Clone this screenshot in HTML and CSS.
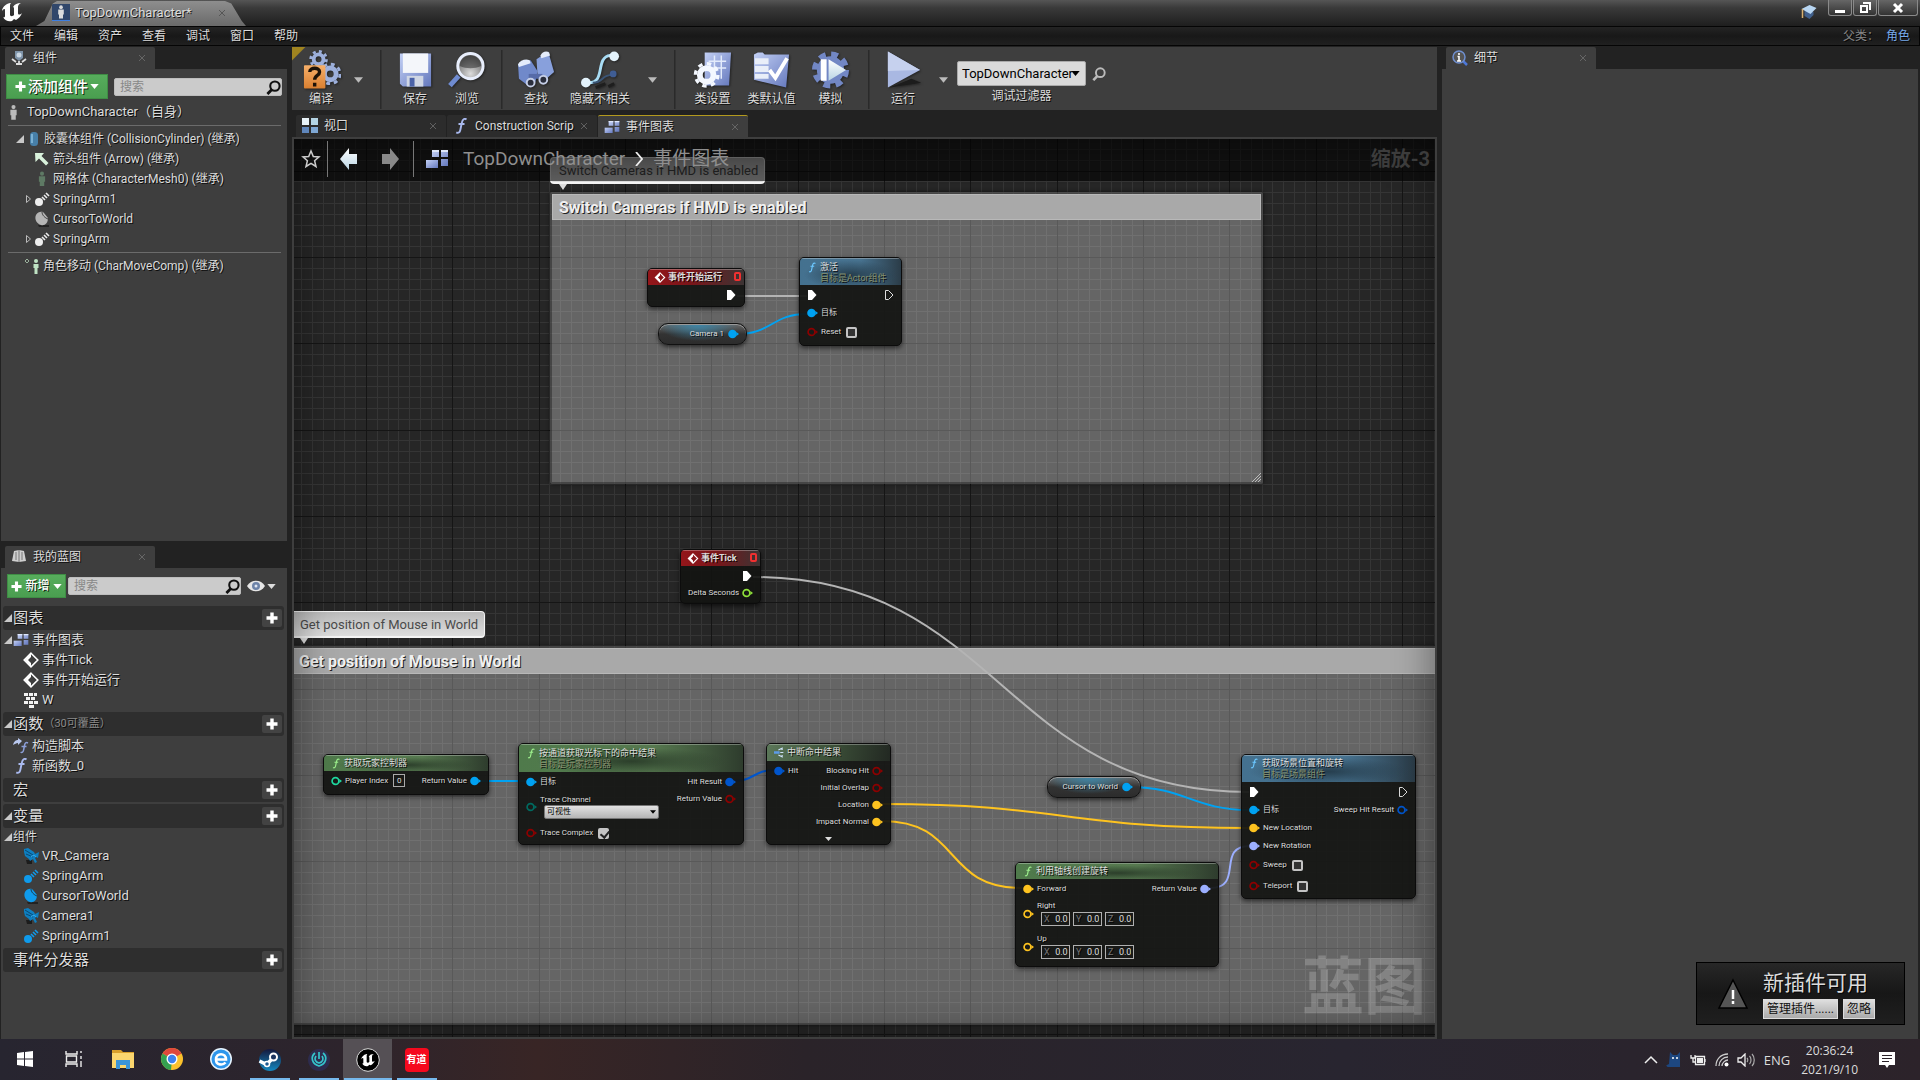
FILE: index.html
```html
<!DOCTYPE html>
<html lang="zh-CN">
<head>
    <meta charset="UTF-8">
    <meta name="viewport" content="width=device-width, initial-scale=1.0">
    <title>TopDownCharacter</title>
    <link rel="stylesheet" href="styles.css">
</head>
<body>

    <!-- Icon sprite -->
    <svg class="sprite" aria-hidden="true">
        <defs>
            <linearGradient id="blue" x1="0" y1="0" x2="1" y2="1"><stop offset="0" stop-color="#c3d0f5"/><stop offset="1" stop-color="#6478bd"/></linearGradient>
            <linearGradient id="pale" x1="0" y1="0" x2="0" y2="1"><stop offset="0" stop-color="#ffffff"/><stop offset="1" stop-color="#b9d4e4"/></linearGradient>
            <linearGradient id="orange" x1="0" y1="0" x2="0" y2="1"><stop offset="0" stop-color="#f7b06a"/><stop offset="1" stop-color="#d97f30"/></linearGradient>
            <linearGradient id="steam" x1="0" y1="0" x2="0" y2="1"><stop offset="0" stop-color="#14183c"/><stop offset="1" stop-color="#1488c0"/></linearGradient>
            <radialGradient id="lens" cx=".5" cy=".8" r=".8"><stop offset="0" stop-color="#dcdcdc"/><stop offset="1" stop-color="#555"/></radialGradient>
        </defs>
        <symbol id="i-pin" viewBox="0 0 11 10"><circle cx="4.5" cy="5" r="3.4" fill="none" stroke="currentColor" stroke-width="1.7"/><path d="M8.4 3 11 5 8.4 7z" fill="currentColor"/></symbol>
        <symbol id="i-pin-on" viewBox="0 0 11 10"><circle cx="4.5" cy="5" r="4.3" fill="currentColor"/><path d="M8.4 3 11 5 8.4 7z" fill="currentColor"/></symbol>
        <symbol id="i-exec" viewBox="0 0 11 10"><path d="M2.500.5h3L10 5 5.500 9.500h-3z" fill="none" stroke="#ddd"/></symbol>
        <symbol id="i-exec-on" viewBox="0 0 11 10"><path d="M1 0h4l4.500 5L5 10H1z" fill="#fff"/></symbol>
        <symbol id="i-func" viewBox="0 0 16 16"><path d="M13.500 1.500c-2-1.500-4 0-4.600 3L7.300 12c-.5 2.500-2 3.500-4 2.400M5.500 6h6" fill="none" stroke="currentColor" stroke-width="1.900"/></symbol>
        <symbol id="i-event" viewBox="0 0 16 16"><path d="M8 1.200 14.800 8 8 14.800 1.200 8z" fill="none" stroke="#fff" stroke-width="1.600"/><path d="M8 1.500v3.500L5 8l3 3v3.500L1.500 8z" fill="#fff"/></symbol>
        <symbol id="i-break" viewBox="0 0 16 16"><path d="M0 6h9v4H0z" fill="#5d9be8"/><path d="M7 4l6-3v3M7 12l6 3v-3M10 8h5" stroke="#cfe2f8" stroke-width="1.800" fill="none"/></symbol>
        <symbol id="i-graph" viewBox="0 0 24 20"><path d="M7 1h7v7H7zM16 1h7v7h-7zM16 10h7v7h-7z" fill="url(#blue)"/><path d="M1 11h12v8H1z" fill="url(#blue)"/><path d="M7 1h7v2H7zM16 1h7v2h-7z" fill="#dfe8fb"/></symbol>
        <symbol id="i-view" viewBox="0 0 16 16"><path d="M0 0h7v7H0z" fill="#e8f3f8"/><path d="M9 0h7v7H9z" fill="#b4d4e4"/><path d="M0 9h7v6H0z" fill="#5f86bb"/><path d="M9 9h7v6H9z" fill="#7ea7d3"/></symbol>
        <symbol id="i-x" viewBox="0 0 8 8"><path d="M1 1l6 6M7 1 1 7" stroke="#777" fill="none"/></symbol>
        <symbol id="i-down" viewBox="0 0 10 6"><path d="M0 0h10L5 6z" fill="currentColor"/></symbol>
        <symbol id="i-open" viewBox="0 0 8 8"><path d="M8 0v8H0z" fill="#c8c8c8"/></symbol>
        <symbol id="i-closed" viewBox="0 0 8 8"><path d="M1.500.5v7L5.500 4z" fill="none" stroke="#bbb"/></symbol>
        <symbol id="i-plus" viewBox="0 0 12 12"><path d="M4.300.5h3.400v3.800h3.800v3.400H7.700v3.800H4.300V7.700H.5V4.300h3.800z" fill="#fff"/></symbol>
        <symbol id="i-search" viewBox="0 0 16 16"><circle cx="9.500" cy="6.500" r="5" fill="none" stroke="currentColor" stroke-width="2.200"/><path d="M6 10.500 1.500 15" stroke="currentColor" stroke-width="3"/></symbol>
        <symbol id="i-person" viewBox="0 0 10 18"><circle cx="5" cy="3" r="2.300" fill="currentColor"/><path d="M1.500 6h7v6H7.500v5h-5v-5h-1z" fill="currentColor"/></symbol>
        <symbol id="i-capsule" viewBox="0 0 10 16"><rect x="1" y="1" width="8" height="14" rx="3.500" fill="#477fa8"/><path d="M3 3v9" stroke="#8bc0e0" stroke-width="1.500"/></symbol>
        <symbol id="i-arrow" viewBox="0 0 16 16"><path d="M1 2h9L7.500 5l7 7-2.500 2.500-7-7L1.500 11z" fill="#d9f2dc"/></symbol>
        <symbol id="i-spring" viewBox="0 0 16 16"><circle cx="5" cy="11" r="4" fill="currentColor"/><path d="M8 6l3 3M10 4l3 3M12 2l3 3" stroke="currentColor" stroke-width="1.600"/></symbol>
        <symbol id="i-ball" viewBox="0 0 16 16"><path d="M4 14h11v2H5z" fill="#222"/><path d="M2 4c2-4 7-4 8-2l4 5c0 5-3 8-7 7S0 8 2 4z" fill="currentColor"/><path d="M8 1c0 3 3 6 6 7" stroke="#222" stroke-width=".8" fill="none"/></symbol>
        <symbol id="i-cam" viewBox="0 0 16 16"><path d="M3 12h6v4H4z" fill="#1c1c1c"/><path d="M1 1l4-1 6 4 1 2 4-2-1 6-2-1-1 1 2 4-2 1-2-4-3 2-1-2-4-3-1-4z" fill="#0f7fc0"/><path d="M2 2l8 5M3 6l7 3" stroke="#0a4a74"/><path d="M8 9c2-2 4-2 5 0" stroke="#3db4f5" fill="none"/></symbol>
        <symbol id="i-keys" viewBox="0 0 16 16"><path d="M1 1h4v3H1zM6 1h4v3H6zM11 1h3v3h-3zM3 5h4v3H3zM8 5h4v3H8zM1 9h4v3H1zM6 9h4v3H6zM11 9h4v3h-4zM6 13h5v3H6z" fill="#f2f2f2"/></symbol>
        <symbol id="i-construct" viewBox="0 0 16 16"><path d="M0 7c1-4 3-5 5-5V0l4 3-4 4V5C3 5 2 6 0 7z" fill="#b9c8ee"/><path d="M15 5c-2-1-3 0-3.400 2l-1 5c-.3 2-1.600 3-3 2M8.500 8.500h5" fill="none" stroke="#8c9fd8" stroke-width="1.500"/></symbol>
        <symbol id="i-comp" viewBox="0 0 16 16"><path d="M4 1h8v7L8 11 4 8z" fill="#7e93a8"/><circle cx="8" cy="5" r="2.500" fill="#c9d6e2"/><path d="M1 9l4 3M15 9l-4 3M8 11v4M5 14h6" stroke="#ddd" stroke-width="1.800"/></symbol>
        <symbol id="i-book" viewBox="0 0 16 16"><path d="M3 2l5-1 5 1 2 10-7 1-7-1z" fill="#cfcfcf"/><path d="M8 1v12M5 3v8M11 3v8" stroke="#777"/></symbol>
        <symbol id="i-info" viewBox="0 0 16 16"><path d="M10 10l5 5" stroke="#4d78d8" stroke-width="2.500"/><circle cx="7" cy="7" r="6" fill="#555" stroke="#6f8fd0" stroke-width="1.500"/><path d="M7 3v2M5.500 6.500H7V11M5 11h4" stroke="#fff" stroke-width="1.600" fill="none"/></symbol>
        <symbol id="i-unreal" viewBox="0 0 24 24"><path d="M10 3C5 4 2 8 2 11c1-2 3-3 3-1v6c0 1-1 2-2 1 2 4 6 5 9 4l2-2 2 1c3-2 5-4 6-7-2 2-4 2-4 0V7c0-2 1-3 3-4-4 0-6 1-8 4 1 0 1 1 1 2v6c-1 1-3 2-4 0V6c0-1 0-2 1-3z" fill="#fff"/></symbol>
    </svg>

    <header class="titlebar">
        <svg class="logo"><use href="#i-unreal"/></svg>
        <div class="window-tab">
            <span class="asset"><svg width="8" height="16"><use href="#i-person"/></svg></span>
            <span>TopDownCharacter*</span>
            <button class="close" aria-label="关闭"><svg><use href="#i-x"/></svg></button>
        </div>
        <svg class="tutorial" viewBox="0 0 16 16"><path d="M4 7v5l5 3 4-4V8z" fill="#41608c"/><path d="M1 5l8-4 7 3-6 6z" fill="#b8d6f2"/><path d="M2 5v9" stroke="#d8b070" stroke-width="1.500"/></svg>
        <div class="window-buttons">
            <button aria-label="最小化"><svg width="12" height="12"><path d="M1 8h10v3H1z" fill="#fff"/></svg></button>
            <button aria-label="还原"><svg width="12" height="12"><path d="M4 1h7v7M2 4h6v6H2z" fill="none" stroke="#fff" stroke-width="2"/></svg></button>
            <button class="wide" aria-label="关闭窗口"><svg width="12" height="12"><path d="M2 2l8 8M10 2l-8 8" stroke="#fff" stroke-width="3"/></svg></button>
        </div>
    </header>

    <nav class="menubar">
        <a href="#">文件</a><a href="#">编辑</a><a href="#">资产</a><a href="#">查看</a><a href="#">调试</a><a href="#">窗口</a><a href="#">帮助</a>
        <span class="parent">父类： <a href="#">角色</a></span>
    </nav>

    <main class="editor">
        <aside class="left">
            <section class="dock components">
                <div class="tab"><svg class="icon"><use href="#i-comp"/></svg><span>组件</span><button class="close" aria-label="关闭"><svg><use href="#i-x"/></svg></button></div>
                <div class="panel">
                    <div class="tools">
                        <button class="green big"><svg class="plus"><use href="#i-plus"/></svg>添加组件<svg class="caret"><use href="#i-down"/></svg></button>
                        <div class="search"><input type="text" placeholder="搜索" aria-label="搜索组件"><svg><use href="#i-search"/></svg></div>
                    </div>
                    <div class="self"><svg class="man"><use href="#i-person"/></svg>TopDownCharacter（自身）</div>
                    <hr>
                    <ul class="tree small">
                        <li><svg class="fold"><use href="#i-open"/></svg><svg class="icon slim"><use href="#i-capsule"/></svg>胶囊体组件 (CollisionCylinder) (继承)</li>
                        <li class="deep"><svg class="icon"><use href="#i-arrow"/></svg>箭头组件 (Arrow) (继承)</li>
                        <li class="deep"><svg class="icon mesh"><use href="#i-person"/></svg>网格体 (CharacterMesh0) (继承)</li>
                        <li class="deep"><svg class="fold"><use href="#i-closed"/></svg><svg class="icon white"><use href="#i-spring"/></svg>SpringArm1</li>
                        <li class="deep"><svg class="icon grey"><use href="#i-ball"/></svg>CursorToWorld</li>
                        <li class="deep"><svg class="fold"><use href="#i-closed"/></svg><svg class="icon white"><use href="#i-spring"/></svg>SpringArm</li>
                    </ul>
                    <hr>
                    <ul class="tree small">
                        <li class="move"><svg class="icon" viewBox="0 0 16 16"><path d="M3 1l2 2-2 2-2-2z" fill="none" stroke="#9ab09c"/><circle cx="12" cy="3" r="2" fill="#bfe3c4"/><path d="M9.500 6h5v4h-1v6h-3v-6h-1z" fill="#bfe3c4"/></svg>角色移动 (CharMoveComp) (继承)</li>
                    </ul>
                </div>
            </section>

            <section class="dock blueprint">
                <div class="tab"><svg class="icon"><use href="#i-book"/></svg><span>我的蓝图</span><button class="close" aria-label="关闭"><svg><use href="#i-x"/></svg></button></div>
                <div class="panel">
                    <div class="tools">
                        <button class="green"><svg class="plus"><use href="#i-plus"/></svg>新增<svg class="caret"><use href="#i-down"/></svg></button>
                        <div class="search"><input type="text" placeholder="搜索" aria-label="搜索蓝图"><svg><use href="#i-search"/></svg></div>
                        <button class="eye" aria-label="查看选项"><svg width="18" height="12" viewBox="0 0 18 12"><path d="M0 6c4-7 14-7 18 0-4 7-14 7-18 0z" fill="#e6e6e6"/><circle cx="9" cy="6" r="4" fill="#6d83a8"/><circle cx="9" cy="6" r="1.500" fill="#dfe6f2"/></svg><svg class="caret"><use href="#i-down"/></svg></button>
                    </div>
                    <h3><svg class="fold"><use href="#i-open"/></svg>图表<button aria-label="添加图表"><svg><use href="#i-plus"/></svg></button></h3>
                    <ul class="tree">
                        <li class="top"><svg class="fold"><use href="#i-open"/></svg><svg class="icon"><use href="#i-graph"/></svg>事件图表</li>
                        <li><svg class="icon"><use href="#i-event"/></svg>事件Tick</li>
                        <li><svg class="icon"><use href="#i-event"/></svg>事件开始运行</li>
                        <li><svg class="icon"><use href="#i-keys"/></svg>W</li>
                    </ul>
                    <h3><svg class="fold"><use href="#i-open"/></svg>函数<small>（30可覆盖）</small><button aria-label="添加函数"><svg><use href="#i-plus"/></svg></button></h3>
                    <ul class="tree">
                        <li class="top"><svg class="icon"><use href="#i-construct"/></svg>构造脚本</li>
                        <li class="top"><svg class="icon violet"><use href="#i-func"/></svg>新函数_0</li>
                    </ul>
                    <h3>宏<button aria-label="添加宏"><svg><use href="#i-plus"/></svg></button></h3>
                    <h3><svg class="fold"><use href="#i-open"/></svg>变量<button aria-label="添加变量"><svg><use href="#i-plus"/></svg></button></h3>
                    <h4><svg class="fold"><use href="#i-open"/></svg>组件</h4>
                    <ul class="tree vars">
                        <li><svg class="icon"><use href="#i-cam"/></svg>VR_Camera</li>
                        <li><svg class="icon"><use href="#i-spring"/></svg>SpringArm</li>
                        <li><svg class="icon"><use href="#i-ball"/></svg>CursorToWorld</li>
                        <li><svg class="icon"><use href="#i-cam"/></svg>Camera1</li>
                        <li><svg class="icon"><use href="#i-spring"/></svg>SpringArm1</li>
                    </ul>
                    <h3>事件分发器<button aria-label="添加事件分发器"><svg><use href="#i-plus"/></svg></button></h3>
                </div>
            </section>
        </aside>

        <section class="center">
            <div class="toolbar">
                <button class="tool compile"><svg viewBox="0 0 40 40"><g fill="none" stroke="#9db0dc"><circle cx="17" cy="9" r="5" stroke-width="4"/><circle cx="17" cy="9" r="8" stroke-width="3" stroke-dasharray="3 3.300"/><circle cx="29" cy="24" r="6" stroke-width="5"/><circle cx="29" cy="24" r="10" stroke-width="3" stroke-dasharray="4 3.900"/></g><rect x="2" y="15" width="22" height="24" rx="1" fill="url(#orange)"/><path d="M8 22c0-5 10-5 10 0 0 4-5 3-5 8M13 33v4" fill="none" stroke="#1c1208" stroke-width="3.500"/></svg>编译</button>
                <button class="drop" aria-label="编译选项"><svg><use href="#i-down"/></svg></button>
                <i></i>
                <button class="tool"><svg viewBox="0 0 40 40"><path d="M4 3h32v34H7l-3-3z" fill="url(#blue)"/><path d="M7 3h26v20H7z" fill="#f4f6fa"/><path d="M11 26h17v11H11z" fill="#cfd6e4"/><path d="M14 28h5v9h-5z" fill="#4a62a8"/></svg>保存</button>
                <button class="tool"><svg viewBox="0 0 40 40"><path d="M11 26 2 36" stroke="#6f8bd0" stroke-width="5"/><circle cx="23" cy="16" r="13" fill="url(#lens)" stroke="#e8eefc" stroke-width="3"/><path d="M12 16a11 11 0 0 1 22 0c-7 3-15 3-22 0z" fill="#222" opacity=".5"/></svg>浏览</button>
                <i></i>
                <button class="tool"><svg viewBox="0 0 40 40"><path d="M1 14l13-4 7 11-2 11-9 3-8-6z" fill="#7089ca"/><path d="M20 9l12-8 6 21-9 8-8-5z" fill="#88a0dc"/><path d="M1 14c2-4 8-6 12-4l1 3-12 4z" fill="#e4ecfb"/><path d="M24 5c2-4 6-5 9-3l1 3-9 3z" fill="#e4ecfb"/><path d="M12 24h14v5H12z" fill="#566ba8"/><circle cx="14" cy="33" r="4" fill="#2a2e3c" stroke="#c5cee6" stroke-width="2"/><circle cx="27" cy="30" r="4" fill="#2a2e3c" stroke="#c5cee6" stroke-width="2"/></svg>查找</button>
                <button class="tool hide"><svg viewBox="0 0 40 40"><path d="M8 33c18 0 6-26 22-28" fill="none" stroke="#a8dcf4" stroke-width="3"/><path d="M12 33c12 0 8-8 20-8" fill="none" stroke="#3b5575" stroke-width="2"/><circle cx="34" cy="6" r="5" fill="#e4f3fc"/><circle cx="5" cy="33" r="5" fill="#e4f3fc"/><circle cx="33" cy="24" r="3.500" fill="#3f5d94"/><path d="M15 38l10-4M28 37l6-3" stroke="#1e1e1e" stroke-width="3"/></svg>隐藏不相关</button>
                <button class="drop" aria-label="隐藏选项"><svg><use href="#i-down"/></svg></button>
                <i></i>
                <button class="tool class"><svg viewBox="0 0 40 40"><path d="M12 2h27l-2 34H12z" fill="url(#blue)"/><path d="M16 11h18M16 18h18M22 5v20M29 5v24" stroke="#e3ebfb" stroke-width="1.500"/><circle cx="14" cy="25" r="7" fill="none" stroke="#f4f8ff" stroke-width="6"/><circle cx="14" cy="25" r="11.500" fill="none" stroke="#f4f8ff" stroke-width="3.500" stroke-dasharray="4.500 4.500"/></svg>类设置</button>
                <button class="tool class"><svg viewBox="0 0 40 40"><path d="M2 4l4-2h5l2 2h25l-3 34L2 30z" fill="url(#blue)"/><path d="M3 8h14v6H3zM3 16h14v6H3zM3 24h14v5H3z" fill="#e9eef9"/><path d="M18 20l6 8L36 8" fill="none" stroke="#fff" stroke-width="4"/></svg>类默认值</button>
                <button class="tool class"><svg viewBox="0 0 40 40"><circle cx="20" cy="20" r="11" fill="#7287c4" stroke="#7287c4" stroke-width="6"/><circle cx="20" cy="20" r="16" fill="none" stroke="#7287c4" stroke-width="6" stroke-dasharray="7 5.600"/><path d="M10 9h6v22h-6z" fill="#fff"/><path d="M18 9l18 11-18 11z" fill="url(#pale)"/></svg>模拟</button>
                <i></i>
                <button class="tool"><svg viewBox="0 0 40 40"><path d="M6 38l32-5-10-4z" fill="#1c1c1c"/><path d="M4 1l33 19L4 38z" fill="#a9b8e2"/><path d="M4 1l33 19L4 21z" fill="#c6d1ee"/></svg>运行</button>
                <button class="drop play" aria-label="运行选项"><svg><use href="#i-down"/></svg></button>
                <div class="debug">
                    <div class="pick">
                        <select id="debug-filter"><option>TopDownCharacter</option></select>
                        <svg class="caret"><use href="#i-down"/></svg>
                    </div>
                    <label for="debug-filter">调试过滤器</label>
                </div>
                <button class="find" aria-label="定位"><svg width="14" height="14"><use href="#i-search"/></svg></button>
            </div>

            <div class="doc-tabs">
                <div class="tab"><svg class="icon"><use href="#i-view"/></svg><span>视口</span><button class="close" aria-label="关闭"><svg><use href="#i-x"/></svg></button></div>
                <div class="tab"><svg class="icon violet"><use href="#i-func"/></svg><span>Construction Scrip</span><button class="close" aria-label="关闭"><svg><use href="#i-x"/></svg></button></div>
                <div class="tab active"><svg class="icon"><use href="#i-graph"/></svg><span>事件图表</span><button class="close" aria-label="关闭"><svg><use href="#i-x"/></svg></button></div>
            </div>

            <div class="graph">
                <svg class="grid">
                    <defs>
                        <pattern id="grid" x="72" y="118" width="259" height="259" patternUnits="userSpaceOnUse">
                            <path d="M11 0v259M22 0v259M32 0v259M43 0v259M54 0v259M65 0v259M76 0v259M97 0v259M108 0v259M119 0v259M129 0v259M140 0v259M151 0v259M162 0v259M183 0v259M194 0v259M205 0v259M216 0v259M227 0v259M237 0v259M248 0v259M0 11h259M0 22h259M0 32h259M0 43h259M0 54h259M0 65h259M0 76h259M0 97h259M0 108h259M0 119h259M0 129h259M0 140h259M0 151h259M0 162h259M0 183h259M0 194h259M0 205h259M0 216h259M0 227h259M0 237h259M0 248h259" transform="translate(.5 .5)" stroke="#353535"/>
                            <path d="M0 0v259M86 0v259M173 0v259M0 0h259M0 86h259M0 173h259" transform="translate(.5 .5)" stroke="#151515"/>
                        </pattern>
                    </defs>
                    <rect width="100%" height="100%" fill="url(#grid)"/>
                </svg>

                <div class="comment c-hmd"><h2>Switch Cameras if HMD is enabled</h2><svg class="grip" viewBox="0 0 10 10"><path d="M1 10 10 1M4 10l6-6M7 10l3-3" stroke="#bbb"/></svg></div>
                <div class="comment c-mouse"><h2>Get position of Mouse in World</h2></div>
                <div class="bubble b-hmd">Switch Cameras if HMD is enabled</div>
                <div class="bubble b-mouse">Get position of Mouse in World</div>

                <svg class="wires">
                    <g class="exec"><path d="M443 157H513"/><path d="M459 438C707 438 707 653 955 653"/></g>
                    <g class="object"><path d="M443 195C478 195 478 175 513 175"/><path d="M186 642H232"/><path d="M836 648C890 648 900 671 955 671"/></g>
                    <g class="struct"><path d="M440 642C460 642 460 631 480 631"/></g>
                    <g class="vector"><path d="M588 665C770 665 770 689 955 689"/><path d="M588 682C668 682 648 749 728 749"/></g>
                    <g class="rotator"><path d="M916 749C951 749 921 707 956 707"/></g>
                </svg>

                <article class="node event n-begin">
                    <header><svg><use href="#i-event"/></svg>事件开始运行<b></b></header>
                    <div class="pins"><div class="out"><p><svg><use href="#i-exec-on"/></svg></p></div></div>
                </article>

                <article class="node call n-activate">
                    <header><svg><use href="#i-func"/></svg><div>激活<em>目标是Actor组件</em></div></header>
                    <div class="pins spaced">
                        <div><p><svg><use href="#i-exec-on"/></svg></p><p><svg class="object"><use href="#i-pin-on"/></svg>目标</p><p class="tall"><svg class="bool"><use href="#i-pin"/></svg><label>Reset<input type="checkbox"></label></p></div>
                        <div class="out"><p><svg><use href="#i-exec"/></svg></p></div>
                    </div>
                </article>

                <div class="variable n-camera">Camera 1<svg class="object"><use href="#i-pin-on"/></svg></div>

                <article class="node event n-tick">
                    <header><svg><use href="#i-event"/></svg>事件Tick<b></b></header>
                    <div class="pins"><div class="out"><p><svg><use href="#i-exec-on"/></svg></p><p>Delta Seconds<svg class="float"><use href="#i-pin"/></svg></p></div></div>
                </article>

                <article class="node pure n-player">
                    <header><svg><use href="#i-func"/></svg>获取玩家控制器</header>
                    <div class="pins">
                        <div><p><svg class="int"><use href="#i-pin"/></svg><label>Player Index<input class="num" type="text" value="0"></label></p></div>
                        <div class="out"><p>Return Value<svg class="object"><use href="#i-pin-on"/></svg></p></div>
                    </div>
                </article>

                <article class="node pure n-trace">
                    <header><svg><use href="#i-func"/></svg><div>按通道获取光标下的命中结果<em>目标是玩家控制器</em></div></header>
                    <div class="pins">
                        <div>
                            <p><svg class="object"><use href="#i-pin-on"/></svg>目标</p>
                            <div class="block"><svg class="byte"><use href="#i-pin"/></svg><div><label for="channel">Trace Channel</label><div class="pick"><select id="channel"><option>可视性</option></select><svg class="caret"><use href="#i-down"/></svg></div></div></div>
                            <p class="tall"><svg class="bool"><use href="#i-pin"/></svg><label>Trace Complex<input type="checkbox" checked></label></p>
                        </div>
                        <div class="out"><p>Hit Result<svg class="struct"><use href="#i-pin-on"/></svg></p><p>Return Value<svg class="bool"><use href="#i-pin"/></svg></p></div>
                    </div>
                </article>

                <article class="node pure plain n-break">
                    <header><svg><use href="#i-break"/></svg>中断命中结果</header>
                    <div class="pins">
                        <div><p><svg class="struct"><use href="#i-pin-on"/></svg>Hit</p></div>
                        <div class="out"><p>Blocking Hit<svg class="bool"><use href="#i-pin"/></svg></p><p>Initial Overlap<svg class="bool"><use href="#i-pin"/></svg></p><p>Location<svg class="vector"><use href="#i-pin-on"/></svg></p><p>Impact Normal<svg class="vector"><use href="#i-pin-on"/></svg></p></div>
                    </div>
                    <button class="expand" aria-label="展开"><svg><use href="#i-down"/></svg></button>
                </article>

                <div class="variable n-cursor">Cursor to World<svg class="object"><use href="#i-pin-on"/></svg></div>

                <article class="node pure n-axes">
                    <header><svg><use href="#i-func"/></svg>利用轴线创建旋转</header>
                    <div class="pins">
                        <div>
                            <p><svg class="vector"><use href="#i-pin-on"/></svg>Forward</p>
                            <div class="block"><svg class="vector"><use href="#i-pin"/></svg><div>Right<div class="xyz"><label>X<input type="text" value="0.0"></label><label>Y<input type="text" value="0.0"></label><label>Z<input type="text" value="0.0"></label></div></div></div>
                            <div class="block"><svg class="vector"><use href="#i-pin"/></svg><div>Up<div class="xyz"><label>X<input type="text" value="0.0"></label><label>Y<input type="text" value="0.0"></label><label>Z<input type="text" value="0.0"></label></div></div></div>
                        </div>
                        <div class="out"><p>Return Value<svg class="rotator"><use href="#i-pin-on"/></svg></p></div>
                    </div>
                </article>

                <article class="node call n-location">
                    <header><svg><use href="#i-func"/></svg><div>获取场景位置和旋转<em>目标是场景组件</em></div></header>
                    <div class="pins spaced">
                        <div><p><svg><use href="#i-exec-on"/></svg></p><p><svg class="object"><use href="#i-pin-on"/></svg>目标</p><p><svg class="vector"><use href="#i-pin-on"/></svg>New Location</p><p><svg class="rotator"><use href="#i-pin-on"/></svg>New Rotation</p><p class="tall"><svg class="bool"><use href="#i-pin"/></svg><label>Sweep<input type="checkbox"></label></p><p class="tall"><svg class="bool"><use href="#i-pin"/></svg><label>Teleport<input type="checkbox"></label></p></div>
                        <div class="out"><p><svg><use href="#i-exec"/></svg></p><p>Sweep Hit Result<svg class="struct"><use href="#i-pin"/></svg></p></div>
                    </div>
                </article>

                <div class="watermark">蓝图</div>
                <div class="vignette"></div>

                <div class="crumbs">
                    <button aria-label="收藏"><svg width="20" height="20" viewBox="0 0 20 20"><path d="M10 2l2.300 5.500 5.700.4-4.400 3.800 1.400 5.800-5-3.200-5 3.200 1.400-5.800L2 7.900l5.700-.4z" fill="none" stroke="#ccc" stroke-width="1.500"/></svg></button>
                    <i></i>
                    <button class="nav" aria-label="后退"><svg width="18" height="22" viewBox="0 0 18 22"><path d="M0 11 9 0v6h8v10H9v6z" fill="url(#pale)"/></svg></button>
                    <button class="nav" aria-label="前进"><svg width="18" height="22" viewBox="0 0 18 22"><path d="M18 11 9 0v6H1v10h8v6z" fill="#888"/></svg></button>
                    <i></i>
                    <svg class="where"><use href="#i-graph"/></svg>
                    <a href="#">TopDownCharacter</a>
                    <svg class="sep" viewBox="0 0 8 14"><path d="M1 0l6 7-6 7" fill="none" stroke="#eee" stroke-width="1.800"/></svg>
                    <a href="#">事件图表</a>
                    <span class="zoom">缩放-3</span>
                </div>
            </div>
        </section>

        <aside class="right dock">
            <div class="tab"><svg class="icon"><use href="#i-info"/></svg><span>细节</span><button class="close" aria-label="关闭"><svg><use href="#i-x"/></svg></button></div>
            <div class="panel"></div>
        </aside>
    </main>

    <div class="toast">
        <svg width="32" height="32" viewBox="0 0 32 32"><path d="M16 2 30 30H2z" fill="#555" stroke="#000" stroke-width="1.500"/><path d="M16 12v9M16 23v3" stroke="#fff" stroke-width="2.500"/></svg>
        <div>
            <h2>新插件可用</h2>
            <button>管理插件......</button><button>忽略</button>
        </div>
    </div>

    <footer class="taskbar">
        <button aria-label="开始"><svg viewBox="0 0 24 24"><path d="M4 6l7-1v6.500H4zM12 5l8-1v7.500h-8zM4 12.500h7V19l-7-1zM12 12.500h8V20l-8-1z" fill="#fff"/></svg></button>
        <button aria-label="任务视图"><svg viewBox="0 0 24 24"><path d="M4 4v3h11V4M4 20v-3h11v3M4.500 9h10v6h-10zM19 4v2M19 9v3M19 14v6" fill="none" stroke="#eee" stroke-width="1.400"/></svg></button>
        <button aria-label="文件资源管理器"><svg viewBox="0 0 24 24"><path d="M1 3h9l2 2h11v16H1z" fill="#d9a02c"/><path d="M1 6h22v15H1z" fill="#fbd66e"/><path d="M5 13h14v9h-4v-4H9v4H5z" fill="#3b95d9"/></svg></button>
        <button aria-label="Chrome"><svg viewBox="0 0 24 24"><circle cx="12" cy="12" r="11" fill="#fbc12c"/><path d="M12 12 2.500 6.500A11 11 0 0 1 21.500 6.500z" fill="#e0483c"/><path d="M12 12 2.500 6.500A11 11 0 0 0 11 23z" fill="#35a150"/><circle cx="12" cy="12" r="5.500" fill="#fff"/><circle cx="12" cy="12" r="4.200" fill="#3f82ee"/></svg></button>
        <button aria-label="浏览器"><svg viewBox="0 0 24 24"><circle cx="12" cy="12" r="11" fill="#e8f5ff"/><circle cx="12" cy="12" r="9.500" fill="#2e96ec"/><path d="M7 12.500h10c0-7-10-7-10 0 0 6 7 6 9.500 3" fill="none" stroke="#fff" stroke-width="2.600"/></svg></button>
        <button class="running" aria-label="Steam"><svg viewBox="0 0 24 24"><circle cx="12" cy="12" r="11" fill="url(#steam)"/><path d="M1.500 13l7 3.500 6-6" stroke="#fff" stroke-width="3.500" fill="none"/><circle cx="15.500" cy="9" r="3.500" fill="#1a3560" stroke="#fff" stroke-width="2"/><circle cx="9" cy="16" r="2.500" fill="#1d5a90" stroke="#fff" stroke-width="1.500"/></svg></button>
        <button class="running" aria-label="加速器"><svg viewBox="0 0 24 24"><circle cx="12" cy="12" r="11" fill="#2d2c4e"/><path d="M8 5c-5 4-3 11 4 13 7-2 9-9 4-13M9 8c-2 3-1 6 3 7 4-1 5-4 3-7M12 4v7" fill="none" stroke="#35c4cc" stroke-width="1.700"/></svg></button>
        <button class="running current" aria-label="Unreal Editor"><svg viewBox="0 0 24 24"><circle cx="12" cy="12" r="11.300" fill="#000" stroke="#ddd"/><use href="#i-unreal" x="4" y="4" width="16" height="16"/></svg></button>
        <button class="running" aria-label="有道"><span class="youdao">有道</span></button>
        <div class="tray">
            <svg width="14" height="14" viewBox="0 0 14 14"><path d="M1 10l6-6 6 6" fill="none" stroke="#eee" stroke-width="1.500"/></svg>
            <svg width="16" height="16" viewBox="0 0 16 16"><path d="M4 0l3 3h4l3-3v15H3c-3 0-3-2-2-2l2-1z" fill="#1d4780"/><circle cx="7" cy="6" r="1" fill="#fff"/><circle cx="11" cy="6" r="1" fill="#fff"/></svg>
            <svg width="17" height="14" viewBox="0 0 17 14"><path d="M5.500 3.500h9v8h-9zM15 6v3M1 2v3h4V2M3 5v4h2" fill="none" stroke="#eee" stroke-width="1.300"/><path d="M7 5h6v5H7z" fill="#eee"/></svg>
            <svg width="14" height="14" viewBox="0 0 14 14"><path d="M1 13C1 6 6 1 13 1M4 13c0-5 4-9 9-9M7 13c0-3 3-6 6-6" fill="none" stroke="#ccc" stroke-width="1.300"/><circle cx="11.500" cy="11.500" r="2" fill="#fff"/></svg>
            <svg width="18" height="14" viewBox="0 0 18 14"><path d="M1 5h3l4-4v12L4 9H1z" fill="none" stroke="#eee" stroke-width="1.300"/><path d="M10 5c1 1 1 3 0 4M12.500 3c2 2 2 6 0 8M15 1c3 3 3 9 0 12" fill="none" stroke="#aaa" stroke-width="1.200"/></svg>
            <span class="lang">ENG</span>
            <time>20:36:24<br>2021/9/10</time>
            <svg class="notes" width="16" height="16" viewBox="0 0 16 16"><path d="M0 0h16v13h-6l-2 3-2-3H0z" fill="#fff"/><path d="M3 3.500h10M3 6.500h10M3 9.500h7" stroke="#2b2229"/></svg>
        </div>
    </footer>

</body>
</html>
```
FILE: styles.css
```css
/* Base */
* { box-sizing: border-box; }
html, body { height: 100%; }
body {
    margin: 0;
    display: flex;
    flex-direction: column;
    overflow: hidden;
    background: #222;
    color: #dcdcdc;
    font: 13px/20px Roboto, "Noto Sans CJK SC", sans-serif;
    text-shadow: 1px 1px 0 rgba(0, 0, 0, 0.8);
}
button { margin: 0; padding: 0; border: 0; background: none; color: inherit; font: inherit; text-shadow: inherit; }
input, select { margin: 0; font: inherit; border-radius: 0; appearance: none; }
svg { display: block; flex: none; }
a { color: inherit; text-decoration: none; }
ul { list-style: none; margin: 0; padding: 0; }
h2, h3, h4, p { margin: 0; font-weight: normal; }
.sprite { position: absolute; width: 0; height: 0; }

/* Title bar and menu */
.titlebar { display: flex; height: 26px; flex: none; background: linear-gradient(#555, #3a3a3a 30%, #1e1e1e); }
.logo { width: 24px; height: 24px; }
.window-tab {
    display: flex;
    align-items: center;
    gap: 5px;
    width: 210px;
    height: 25px;
    margin: 1px auto 0 12px;
    padding: 0 20px 2px 16px;
    background: linear-gradient(#8e8e8e, #6a6a6a);
    clip-path: polygon(0 100%, 4% 80%, 8% 10%, 10% 0, 90% 0, 93% 10%, 98% 80%, 100% 100%);
}
.asset { display: flex; justify-content: center; width: 18px; height: 17px; background: #31476b; border-bottom: 1px solid #3f7fe0; }
.close { margin-left: auto; opacity: 0.7; }
.close svg { width: 8px; height: 8px; }
.window-tab .close { filter: brightness(0.6); }
.tutorial { width: 17px; height: 16px; margin: 4px 11px 0 0; }
.window-buttons { display: flex; gap: 1px; height: 16px; margin-right: 2px; }
.window-buttons button { display: flex; justify-content: center; align-items: center; width: 24px; border: 1px solid #8a8a8a; border-top: 0; border-radius: 0 0 3px 3px; background: linear-gradient(#666, #333); }
.window-buttons .wide { width: 40px; }
.menubar { display: flex; align-items: center; gap: 20px; flex: none; height: 20px; padding: 0 9px; border: 1px solid #050505; background: linear-gradient(#242424, #181818 50%, #202020); font-size: 12px; line-height: 18px; }
.parent { margin-left: auto; color: #858585; }
.parent a { margin-left: 4px; color: #76a8ea; }

/* Docking layout */
.editor { display: flex; flex: 1; gap: 5px; min-height: 0; padding: 1px 2px 1px 0; }
.left { display: flex; flex-direction: column; gap: 5px; width: 287px; padding-left: 1px; }
.center { display: flex; flex-direction: column; flex: 1; min-width: 0; }
.right { width: 476px; }
.dock { display: flex; flex-direction: column; }
.components { flex: 494; min-height: 0; }
.blueprint { flex: 493; min-height: 0; }
.tab { display: flex; align-items: center; flex: none; width: 150px; height: 22px; margin-left: 4px; padding: 0 9px 0 6px; gap: 6px; background: #3e3e3e; border-radius: 2px 2px 0 0; font-size: 12px; white-space: nowrap; }
.panel { flex: 1; background: #3e3e3e; }
.icon { width: 16px; height: 16px; }
.violet { color: #a9b9ee; }
.white { color: #eee; }
.grey { color: #b5b5b5; }
.mesh { color: #5e7a64; }

/* Side panels */
.tools { display: flex; align-items: center; gap: 6px; padding: 5px 5px 6px; }
.blueprint .tools { gap: 2px; padding: 6px 6px 8px; }
.green { display: flex; align-items: center; justify-content: center; gap: 3px; width: 59px; height: 24px; border: 1px solid #3f8d45; background: linear-gradient(#57ad5c, #4a9e50); color: #fff; font-size: 12px; font-weight: 500; }
.green.big { width: 102px; height: 25px; gap: 2px; font-size: 15px; }
.plus { width: 11px; height: 11px; }
.caret { width: 9px; height: 5px; }
.search { position: relative; flex: 1; height: 18px; }
.search input { display: block; width: 100%; height: 18px; padding: 0 20px 0 5px; border: 1px solid #bdbdbd; border-radius: 2px; background: #cbcbcb; font-size: 12px; line-height: 16px; }
.search input::placeholder { color: #888; text-shadow: none; }
.search svg { position: absolute; right: 1px; top: 2px; width: 15px; height: 15px; color: #111; }
.eye { display: flex; align-items: center; gap: 2px; margin: 0 5px 0 4px; }
.self { display: flex; align-items: center; height: 20px; margin-top: -3px; padding-left: 8px; gap: 9px; }
.man { width: 9px; height: 17px; color: #bbb; }
hr { height: 1px; margin: 3px 6px 3px 7px; border: 0; background: #6b6b6b; }
.tree li { display: flex; align-items: center; gap: 3px; height: 20px; padding-left: 22px; white-space: nowrap; }
.tree .top { padding-left: 12px; }
.tree .top .fold { margin-left: -9px; margin-right: -2px; }
.tree .fold { width: 8px; height: 8px; }
.small { font-size: 12px; }
.small li { height: 20px; padding-left: 15px; gap: 3px; }
.small .slim { width: 14px; }
.small .deep { padding-left: 33px; }
.small .deep .fold { margin-left: -9px; margin-right: -2px; }
.small .move { padding-left: 23px; }
.fold { width: 8px; height: 8px; }
h3 { display: flex; align-items: center; height: 24px; margin: 0 3px 0 2px; padding: 0 2px 0 10px; background: #2e2e2e; border-radius: 3px; }
h3 .fold, h4 .fold { margin: 0 1px 0 -9px; }
h3 small { font-size: 11px; color: #8a8a8a; }
h3 button { display: flex; align-items: center; justify-content: center; width: 20px; height: 18px; margin-left: auto; background: #434343; border-radius: 2px; }
h3 button svg { width: 12px; height: 12px; }
h3 + h3 { margin-top: 2px; }
h4 { display: flex; align-items: center; height: 18px; padding-left: 12px; font-size: 12px; }
.blueprint .tree { padding-bottom: 2px; }
.vars .icon { color: #0f9bec; }

/* Toolbar */
.toolbar { display: flex; flex: none; height: 63px; padding: 3px 0 3px 6px; background: linear-gradient(135deg, #a08420 9px, #3e3e3e 10px); font-size: 12px; line-height: 16px; }
.toolbar > i { width: 1px; height: 59px; margin: 0 8px; background: #2a2a2a; box-shadow: 1px 0 #333; }
.tool { display: flex; flex: none; flex-direction: column; align-items: center; gap: 1px; width: 52px; }
.tool svg { width: 39px; height: 40px; filter: drop-shadow(1px 1px 1px #222); }
.tool.compile { width: 46px; }
.tool.hide { width: 76px; }
.tool.class { width: 59px; }
.drop { flex: none; width: 28px; padding: 2px 9px 0 10px; color: #bbb; }
.drop svg { width: 9px; height: 6px; }
.debug { display: flex; flex-direction: column; align-items: center; width: 129px; gap: 2px; padding-top: 11px; }
.pick { position: relative; width: 100%; }
.pick .caret { position: absolute; right: 6px; top: 10px; color: #000; pointer-events: none; }
.pick select { display: block; width: 100%; height: 25px; padding: 0 4px; border: 1px solid #aaa; border-radius: 2px; background: #dadada; color: #000; font-size: 13px; text-shadow: none; }
.find { align-self: flex-start; padding: 17px 6px; color: #bbb; }

/* Document tabs */
.doc-tabs { display: flex; flex: none; gap: 1px; padding: 5px 0 0 4px; }
.doc-tabs .tab { margin: 0; background: #2c2c2c; }
.doc-tabs .active { background: #3e3e3e; border-top: 1px solid #b39a1e; }

/* Graph canvas */
.graph { position: relative; flex: 1; overflow: hidden; border: 2px solid #3e3e3e; background: #262626; }
.grid, .wires, .vignette { position: absolute; left: 0; top: 0; width: 100%; height: 100%; }
.vignette { box-shadow: inset 0 0 40px rgba(0, 0, 0, 0.45); pointer-events: none; }
.comment { position: absolute; border: 2px solid rgba(90, 90, 90, 0.6); border-radius: 2px; background: rgba(255, 255, 255, 0.295); background-clip: padding-box; box-shadow: 0 0 4px rgba(0, 0, 0, 0.6); }
.comment h2 { height: 26px; padding-left: 6px; background: #a9a9a9; border: 1px solid #b8b8b8; color: #f0f0f0; font-size: 16px; line-height: 26px; font-weight: bold; text-shadow: 1px 1px 0 #222; }
.c-hmd { left: 256px; top: 53px; width: 713px; height: 292px; }
.c-mouse { left: -4px; right: -8px; top: 507px; height: 379px; }
.grip { position: absolute; right: 0; bottom: 0; width: 10px; height: 10px; }
.bubble { position: absolute; height: 27px; padding: 0 6px 0 8px; border: 1px solid #f4f4f4; border-bottom-width: 2px; border-radius: 4px; background: linear-gradient(#bbb, #ddd); color: #4a4a4a; line-height: 25px; text-shadow: none; white-space: nowrap; }
.bubble::after { content: ""; position: absolute; left: 8px; top: 26px; border: 4px solid transparent; border-top: 6px solid #ddd; border-bottom: 0; }
.b-hmd { left: 256px; top: 18px; }
.b-mouse { left: -3px; top: 472px; }
.wires path { fill: none; stroke: currentColor; stroke-width: 2; }
.exec { color: #b4b4b4; }
.object { color: #00a2f2; }
.struct { color: #0055cc; }
.vector { color: #fec31f; }
.rotator { color: #9cafff; }
.bool { color: #8c0000; }
.float { color: #8ee03a; }
.int { color: #1fd8a0; }
.byte { color: #006a60; }

/* Nodes */
.node { position: absolute; border: 1px solid #0c0c0c; border-radius: 5px; background: rgba(18, 20, 17, 0.92); box-shadow: 0 2px 5px rgba(0, 0, 0, 0.6); font-size: 8px; line-height: 10px; overflow: hidden; }
.node header { display: flex; gap: 3px; height: 16px; padding: 2px 3px 0 7px; border-top: 1px solid rgba(255, 255, 255, 0.3); font-size: 9px; line-height: 11px; white-space: nowrap; }
.node header svg { width: 10px; height: 11px; }
.node header em { display: block; color: #85916f; font-style: normal; }
.node.event header { gap: 2px; padding-left: 6px; background: linear-gradient(90deg, #94161a, #7a1519 45%, #3c3434); font-weight: bold; }
.event header svg { width: 12px; height: 11px; }
.event header b { width: 7px; height: 9px; margin-left: auto; border: 2px solid #f03030; border-radius: 2px; }
.pure header { background: radial-gradient(ellipse at 50% 60%, #2c3f2b, transparent 60%), linear-gradient(90deg, #4f7a4b, #56784f 60%, #2e3c2d); }
.pure header svg { color: #9df08d; }
.plain header { height: 17px; background: linear-gradient(100deg, #5b7759, #3d5139 50%, #222822); }
.call header { height: 27px; background: radial-gradient(ellipse at 50% 60%, #263e4e, transparent 65%), linear-gradient(90deg, #44718f, #47728f 60%, #2b3c48); }
.call header svg { color: #6cc8ff; }
.n-trace header { height: 28px; padding-top: 3px; }
.n-activate header { padding-top: 3px; }
.pins { display: flex; justify-content: space-between; padding: 1px 7px 2px 7px; white-space: nowrap; }
.pins p { display: flex; align-items: center; gap: 3px; height: 17px; }
.pins .out { margin-left: auto; }
.pins .out p { justify-content: flex-end; }
.pins svg { width: 11px; height: 10px; }
.pins label { display: flex; align-items: center; gap: 5px; }
.pins .tall { height: 20px; }
.pins.spaced > div { display: flex; flex-direction: column; gap: 1px; }
input[type=checkbox] { position: relative; width: 11px; height: 11px; border: 2px solid #c4c4c4; border-radius: 2px; background: #333; }
input[type=checkbox]:checked { background: #c4c4c4; }
input[type=checkbox]:checked::after { content: ""; position: absolute; left: 2px; top: -1px; width: 4px; height: 7px; border: solid #222; border-width: 0 2px 2px 0; transform: rotate(40deg); }
.num { width: 12px; height: 13px; padding: 0; border: 1px solid #aaa; background: none; color: #ddd; text-align: center; }
.block { display: flex; align-items: center; gap: 3px; height: 33px; }
.xyz { display: flex; gap: 3px; margin: 1px 0 0 4px; }
.xyz label { width: 29px; height: 14px; padding: 0 2px; gap: 1px; border: 1px solid #b0b0b0; color: #777; font-size: 9px; }
.xyz input { width: 18px; padding: 0 1px 0 0; border: 0; background: none; color: #ddd; text-align: right; }
.block .pick { width: 115px; margin: 0 0 0 4px; }
.block select { height: 14px; padding: 0 2px; border: 1px solid #777; background: linear-gradient(#e2e2e2, #b5b5b5); font-size: 8px; }
.block .caret { width: 6px; height: 4px; top: 5px; right: 3px; }
.expand { display: block; margin: 4px auto 0; color: #ddd; }
.expand svg { width: 7px; height: 6px; }
.variable { position: absolute; display: flex; align-items: center; justify-content: flex-end; gap: 4px; height: 22px; padding-right: 7px; border: 1px solid #111; border-radius: 10px; background: radial-gradient(ellipse at 45% 0, #3c86a8, transparent 60%), linear-gradient(#6b6b6b, #333 50%, #2c2c2c); box-shadow: inset 0 1px 0 #999, 0 2px 4px rgba(0, 0, 0, 0.6); font-size: 8px; line-height: 10px; white-space: nowrap; }
.variable svg { width: 11px; height: 10px; }
.n-begin { left: 353px; top: 129px; width: 98px; height: 39px; }
.n-activate { left: 505px; top: 118px; width: 103px; height: 89px; }
.n-camera { left: 364px; top: 184px; width: 89px; }
.n-tick { left: 386px; top: 410px; width: 81px; height: 55px; }
.n-player { left: 29px; top: 615px; width: 166px; height: 41px; }
.n-trace { left: 224px; top: 604px; width: 226px; height: 102px; }
.n-break { left: 472px; top: 604px; width: 125px; height: 102px; }
.n-cursor { left: 753px; top: 637px; width: 94px; }
.n-axes { left: 721px; top: 723px; width: 204px; height: 105px; }
.n-location { left: 947px; top: 615px; width: 175px; height: 145px; }
.watermark { position: absolute; right: 9px; bottom: 17px; color: rgba(255, 255, 255, 0.2); font-size: 62px; line-height: 64px; font-weight: bold; text-shadow: none; }

/* Graph title overlay */
.crumbs { position: absolute; left: 0; top: 0; right: 0; display: flex; align-items: center; height: 42px; padding: 0 5px 2px 7px; background: rgba(0, 0, 0, 0.58); color: #8f8f8f; font-size: 19px; text-shadow: none; white-space: nowrap; }
.crumbs i { width: 1px; height: 36px; margin: 0 6px; background: #777; }
.nav { margin: 0 18px 0 6px; }
.nav + .nav { margin: 0 8px 0 5px; }
.where { width: 26px; height: 20px; margin: 0 13px 0 4px; }
.sep { width: 8px; height: 14px; margin: 0 10px; }
.zoom { margin-left: auto; color: #3c3c3c; font-size: 20px; font-weight: bold; }

/* Notification */
.toast { position: fixed; right: 15px; bottom: 55px; display: flex; align-items: center; gap: 14px; width: 209px; height: 63px; padding-left: 20px; border: 1px solid #000; background: linear-gradient(#272727, #171717 50%, #1f1f1f); }
.toast h2 { font-size: 21px; line-height: 28px; margin-bottom: 2px; }
.toast button { height: 20px; margin-right: 5px; padding: 0 3px; border: 1px solid #ddd; background: linear-gradient(#dedede, #aaa); color: #111; font-size: 12px; line-height: 18px; text-shadow: none; }

/* Taskbar */
.taskbar { display: flex; flex: none; height: 41px; margin-top: -1px; background: linear-gradient(90deg, #272530, #2d242c 18%, #382525 28%, #2a2329 42%, #282530 70%, #2c232a); text-shadow: none; }
.taskbar > button { display: flex; justify-content: center; align-items: center; width: 49px; border-bottom: 2px solid transparent; }
.taskbar > button svg { width: 24px; height: 24px; }
.taskbar .running { background: linear-gradient(#76b9ed, #76b9ed) center bottom / 40px 2px no-repeat; border: 0; }
.taskbar .current { background: linear-gradient(#76b9ed, #76b9ed) center bottom / 48px 2px no-repeat, #555055; }
.youdao { width: 24px; height: 24px; border-radius: 4px; background: #f5091d; color: #fff; font-size: 10px; line-height: 24px; font-weight: bold; }
.tray { display: flex; align-items: center; gap: 8px; margin-left: auto; padding-right: 25px; font-family: "Open Sans", sans-serif; }
.lang { margin: 0 1px; font-size: 13px; }
time { margin-left: 2px; font-size: 12px; line-height: 19px; text-align: center; }
.notes { margin-left: 13px; }
```
